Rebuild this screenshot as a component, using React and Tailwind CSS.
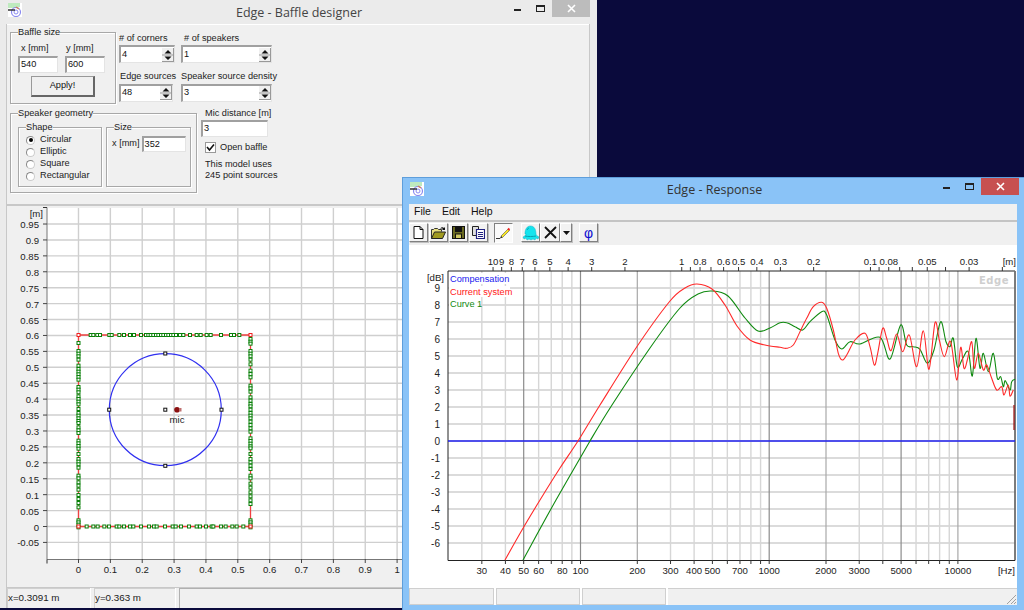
import React from "react";

const font = { fontFamily: '"Liberation Sans", Arial, sans-serif' };

function smooth(pts) {
  let d = `M${pts[0][0]} ${pts[0][1]}`;
  for (let i = 0; i < pts.length - 1; i++) {
    const p0 = pts[i - 1] || pts[i], p1 = pts[i], p2 = pts[i + 1], p3 = pts[i + 2] || p2;
    const c1 = [p1[0] + (p2[0] - p0[0]) / 6, p1[1] + (p2[1] - p0[1]) / 6];
    const c2 = [p2[0] - (p3[0] - p1[0]) / 6, p2[1] - (p3[1] - p1[1]) / 6];
    d += `C${c1[0].toFixed(1)} ${c1[1].toFixed(1)} ${c2[0].toFixed(1)} ${c2[1].toFixed(1)} ${p2[0].toFixed(1)} ${p2[1].toFixed(1)}`;
  }
  return d;
}

const z9 = (a) => a.map(([x, y]) => [780 + x / 3, 290 + y / 3]);
const redPts = [[505, 560], [522, 530], [540, 500], [560, 468], [578, 441], [600, 405], [638, 345], [670, 301], [685, 288], [697, 284], [712, 289], [725, 305], [737, 326], [750, 340], [765, 345],
  ...z9([[0,172],[20,175],[40,165],[60,125],[80,85],[100,50],[125,37],[140,55],[160,120],[175,190],[187,210],[200,195],[225,150],[255,130],[270,170],[283,225],[293,190],[308,115],[320,145],[333,182],[350,132],[368,185],[388,135],[410,230],[430,122],[447,238],[465,98],[478,150],[493,200],[512,155],[530,270],[542,172],[552,235],[562,210],[575,155],[583,235],[595,190],[610,240],[620,225],[635,265],[650,300],[665,290],[672,315],[685,285],[690,318],[700,300]])];
const greenPts = [[523, 560], [556, 500], [590, 441], [612, 405], [650, 348], [680, 308], [698, 294], [712, 291], [728, 296], [745, 318], [758, 331], [770, 328],
  ...z9([[0,98],[20,98],[45,110],[68,120],[90,95],[125,65],[140,75],[165,150],[185,177],[210,155],[240,162],[300,142],[330,207],[362,105],[380,165],[400,170],[420,178],[442,220],[462,180],[482,95],[498,155],[510,170],[520,145],[532,230],[548,205],[565,185],[577,258],[588,145],[600,235],[610,190],[625,245],[640,190],[652,265],[662,260],[670,290],[676,272],[690,300],[695,275],[705,268]])];

const fx = (f) => 580.5 + 188.7 * Math.log10(f / 100);
const dbY = (d) => 441 - 17 * d;

function AppIcon() {
  return (
    <svg width="14" height="14" viewBox="0 0 14 14">
      <rect width="14" height="14" fill="#fff" />
      <path d="M1 0v5M3 0v5M5 0v5M7 0v5M9 0v5M11 0v4" stroke="#7fd67f" strokeWidth="1" />
      <circle cx="8" cy="9" r="4.5" fill="none" stroke="#8a8af0" strokeWidth="1.2" />
      <circle cx="8" cy="9" r="2" fill="none" stroke="#8a8af0" />
      <path d="M8 4l3 2" stroke="#d08060" strokeWidth="1.5" />
      <path d="M0 7h7" stroke="#222" strokeWidth="1.4" />
    </svg>
  );
}

function Controls({ close, text }) {
  return (
    <div className="flex items-start justify-end">
      <div className="w-[23px] h-[17px] flex items-center justify-center">
        <div className={`w-[7px] h-[2px] mt-[3px] ${text}`} />
      </div>
      <div className="w-[23px] h-[17px] flex items-center justify-center">
        <div className="w-[9px] h-[7px] border border-t-2 border-[#222] -mt-[1px]" />
      </div>
      <div className={`w-[38px] h-[17px] flex items-center justify-center ${close}`}>
        <svg width="9" height="9" viewBox="0 0 9 9"><path d="M1 1l7 7M8 1l-7 7" stroke="#fff" strokeWidth="1.6" /></svg>
      </div>
    </div>
  );
}

function Box({ label, className, children }) {
  return (
    <div className={`relative border border-[#a8a8a8] shadow-[1px_1px_0_#fff,inset_1px_1px_0_#fff] ${className}`}>
      <span className="absolute -top-[7px] left-[7px] bg-[#f0f0f0] leading-3 text-[9.2px] text-[#222] whitespace-nowrap">{label}</span>
      {children}
    </div>
  );
}

function Input({ value, className }) {
  return (
    <div className={`bg-white border-t-2 border-l-2 border-[#a0a0a0] border-b border-r border-b-[#e4e4e4] border-r-[#e4e4e4] flex items-center pl-[1px] text-[9.2px] text-[#111] ${className}`}>
      {value}
    </div>
  );
}

function Spin({ value, className }) {
  return (
    <div className={`relative bg-white border-t-2 border-l-2 border-[#a0a0a0] border-b border-r border-b-[#e4e4e4] border-r-[#e4e4e4] flex items-center justify-between pl-[1px] text-[9.2px] text-[#111] h-[18px] ${className}`}>
      {value}
      <svg width="12" height="14" viewBox="0 0 12 14" className="bg-[#f0f0f0]">
        <path d="M0 7h12M11.5 0v14M0 13.5h12" stroke="#999" />
        <path d="M6 2l3.5 3.5h-7zM6 12l3.5-3.5h-7z" fill="#111" />
      </svg>
    </div>
  );
}

function Radio({ label, on }) {
  return (
    <div className="flex items-center h-[12px] gap-[5px] text-[9.2px] text-[#222]">
      <div className="w-[9px] h-[9px] rounded-full bg-white border border-[#ccc] border-t-[#888] border-l-[#888] flex items-center justify-center">
        {on && <div className="w-[4px] h-[4px] rounded-full bg-black" />}
      </div>
      {label}
    </div>
  );
}

function Baffle() {
  const xs = [];
  for (let i = 0; i <= 10; i++) xs.push(i / 10);
  const ys = [];
  for (let i = -1; i <= 19; i++) ys.push(i * 0.05);
  const X = (v) => 78.5 + v * 318.6;
  const Y = (v) => 527.5 - v * 318.4;
  const fmt = (v) => (Math.abs(v) < 1e-6 ? "0" : String(+v.toFixed(2)));
  const top = [92,100,112,120,148,155,178,192,210,222,243,258,265,272,280,288,295,303,310,318,325,333,340,348,360,370,390,410,422,440,452,483,513,522,538].map((a) => 60 + a / 3);
  const left = [72,96,104,112,122,140,150,158,166,174,182,204,212,220,232,240,248,256,270,282,290,298,306,312,325,334,342,365,373,381,389,405,420,428,436,446,470,478,490,500,512,528,540,552,565,604,610,617,625].map((a) => 320 + a / 3);
  const right = [60,68,74,96,104,112,122,136,155,165,175,200,208,218,235,245,255,262,272,282,290,298,308,318,328,338,358,366,374,382,388,405,420,430,440,450,470,478,494,506,520,532,544,555,604,610,617,625].map((a) => 320 + a / 3);
  const bottom = [260,280,293,313,327,350,358,372,390,400,423,447,462,470,495,518,527,543,567,590,600,618,635,640,663,677,697,710,730].map((a) => a / 3);
  const sq = (x, y, k, c = "#0a800a") => <rect key={k} x={x - 1.5} y={y - 1.5} width="3" height="3" fill="#fff" stroke={c} strokeWidth="1" />;
  return (
    <svg viewBox="7 207 396 380" width="396" height="380" className="block" style={font}>
      <rect x="47" y="209" width="356" height="351" fill="#fff" />
      {xs.map((v) => <line key={v} x1={X(v)} x2={X(v)} y1="209" y2="560" stroke="#cfcfcf" strokeWidth="1.4" />)}
      {ys.map((v) => <line key={v} x1="47" x2="403" y1={Y(v)} y2={Y(v)} stroke="#cfcfcf" strokeWidth="1.4" />)}
      <path d="M47 208.5V560.5H403" fill="none" stroke="#777" />
      <path d="M43 208.5h4" stroke="#333" />
      <path d="M47 560.5v4" stroke="#333" />
      {xs.map((v) => <line key={v} x1={X(v)} x2={X(v)} y1="560" y2="564" stroke="#444" />)}
      {ys.map((v) => <line key={v} x1="43" x2="47" y1={Y(v)} y2={Y(v)} stroke="#444" />)}
      {ys.map((v) => <text key={v} x="39" y={Y(v) + 4} textAnchor="end" fontSize="9.6" fill="#222">{fmt(v)}</text>)}
      {xs.map((v) => <text key={v} x={X(v)} y="574" textAnchor="middle" fontSize="9.6" fill="#222">{fmt(v)}</text>)}
      <text x="43" y="218" textAnchor="end" fontSize="9.6" fill="#222">[m]</text>
      <path d="M78.5 336H250.5V527.5H78.5Z" fill="none" stroke="#f04040" strokeWidth="1.3" />
      <circle cx="165.3" cy="410.7" r="56" fill="none" stroke="#3030f0" strokeWidth="1.2" />
      {top.map((x, i) => sq(x, 336, "t" + i))}
      {left.map((y, i) => sq(78.5, y, "l" + i))}
      {right.map((y, i) => sq(250.5, y, "r" + i))}
      {bottom.map((x, i) => sq(x, 527.5, "b" + i))}
      {[[78.5, 336], [250.5, 336], [78.5, 527.5], [250.5, 527.5]].map(([x, y], i) => sq(x, y, "c" + i, "#f02020"))}
      {[[165.3, 354.5], [165.3, 466.8], [109.2, 410.7], [221.5, 410.7], [165.3, 410.7]].map(([x, y], i) => sq(x, y, "h" + i, "#111"))}
      <circle cx="177" cy="410.7" r="2.8" fill="#8a1010" />
      <rect x="179" y="409" width="2.5" height="3.5" fill="#c07070" />
      <text x="177" y="424" textAnchor="middle" fontSize="9.6" fill="#222">mic</text>
    </svg>
  );
}

function Response() {
  const freqs = [30,40,50,60,70,80,90,100,200,300,400,500,600,700,800,900,1000,2000,3000,4000,5000,6000,7000,8000,9000,10000];
  const dark = { 50: "#8c8c8c", 100: "#8c8c8c", 200: "#a8a8a8", 1000: "#8c8c8c", 2000: "#a8a8a8", 5000: "#8c8c8c", 10000: "#a8a8a8" };
  const freqLabels = [30,40,50,60,80,100,200,300,400,500,700,1000,2000,3000,5000,10000];
  const dbs = [];
  for (let d = 9; d >= -6; d--) dbs.push(d);
  const lam = (m) => fx(344 / m);
  const lamTicks = [10,9,8,7,6,5,4,3,2,1,0.9,0.8,0.7,0.6,0.5,0.4,0.3,0.2,0.1,0.09,0.08,0.07,0.06,0.05,0.04,0.03,0.02];
  const lamLabels = [10,9,8,7,6,5,4,3,2,1,0.8,0.6,0.5,0.4,0.3,0.2,0.1,0.08,0.05,0.03];
  return (
    <svg viewBox="409 245 608 343" width="608" height="343" className="block bg-white" style={font}>
      {dbs.map((d) => <line key={d} x1="448" x2="1015" y1={dbY(d)} y2={dbY(d)} stroke="#cfcfcf" strokeWidth="1.4" />)}
      {freqs.map((f) => <line key={f} x1={fx(f)} x2={fx(f)} y1="271" y2="560" stroke={dark[f] || "#d6d6d6"} strokeWidth={dark[f] ? 1.2 : 1.4} />)}
      <path d="M448 271V560.5H1015V271H448" fill="none" stroke="#222" strokeWidth="1" />
      <line x1="1015" x2="1015" y1="271" y2="560" stroke="#777" strokeWidth="1.6" />
      {freqs.map((f) => <line key={f} x1={fx(f)} x2={fx(f)} y1="560" y2="564" stroke="#333" />)}
      {lamTicks.map((m) => <line key={m} x1={lam(m)} x2={lam(m)} y1="267" y2="271" stroke="#333" />)}
      {dbs.map((d) => <text key={d} x="440" y={dbY(d) + 4} textAnchor="end" fontSize="10" fill="#222">{d}</text>)}
      <text x="444" y="281" textAnchor="end" fontSize="9.6" fill="#222">[dB]</text>
      {freqLabels.map((f) => <text key={f} x={fx(f)} y="574" textAnchor="middle" fontSize="9.6" fill="#222">{f}</text>)}
      <text x="1015" y="574" textAnchor="end" fontSize="9.6" fill="#222">[Hz]</text>
      {lamLabels.map((m) => <text key={m} x={lam(m)} y="265" textAnchor="middle" fontSize="9.6" fill="#222">{m}</text>)}
      <text x="1016" y="265" textAnchor="end" fontSize="9.6" fill="#222">[m]</text>
      <line x1="448" x2="1015" y1="441" y2="441" stroke="#2020f0" strokeWidth="1.3" />
      <path d={smooth(greenPts)} fill="none" stroke="#108a10" strokeWidth="1.1" />
      <path d={smooth(redPts)} fill="none" stroke="#ff2a2a" strokeWidth="1.1" />
      <path d="M1014 405V430" stroke="#a01010" strokeWidth="1.2" />
      <rect x="449" y="273" width="59" height="11" fill="#fff" />
      <rect x="449" y="286" width="61" height="11" fill="#fff" />
      <rect x="449" y="298" width="31" height="11" fill="#fff" />
      <text x="450" y="282" fontSize="9.2" fill="#2020f0">Compensation</text>
      <text x="450" y="295" fontSize="9.2" fill="#ff2020">Current system</text>
      <text x="450" y="307" fontSize="9.2" fill="#108a10">Curve 1</text>
      <text x="979" y="284" fontSize="10" fontWeight="700" letterSpacing="0.5" fill="#cfcfcf" style={{ fontFamily: '"DejaVu Sans", sans-serif' }}>Edge</text>
    </svg>
  );
}

function ToolBtn({ children, className = "w-[19px]" }) {
  return (
    <div className={`h-[19px] flex items-center justify-center bg-[#f2f2f2] border border-white border-r-[#808080] border-b-[#808080] shadow-[1px_1px_0_#c0c0c0] ${className}`}>
      {children}
    </div>
  );
}

function Toolbar() {
  return (
    <div className="h-[23px] flex items-start pt-[1px] bg-[#f0f0f0]">
      <ToolBtn>
        <svg width="11" height="13" viewBox="0 0 11 13"><path d="M1 .5h6l3 3v9H1z" fill="#fff" stroke="#111" /><path d="M7 .5v3h3" fill="none" stroke="#111" /></svg>
      </ToolBtn>
      <div className="w-px" />
      <ToolBtn>
        <svg width="15" height="13" viewBox="0 0 15 13"><path d="M.5 12.5v-9h2l1-1h3l1 1h3v2" fill="#e8e080" stroke="#333" /><path d="M.5 12.5l3-6.500h11l-3 6.500z" fill="#a09a20" stroke="#222" /><path d="M9 3c1-2 3-2 4-1l1-1v3h-3l1-1c-1-.7-2-.5-3 0z" fill="#111" /></svg>
      </ToolBtn>
      <div className="w-px" />
      <ToolBtn>
        <svg width="13" height="13" viewBox="0 0 13 13"><rect x=".5" y=".5" width="12" height="12" fill="#6a6a20" stroke="#111" /><rect x="3" y="1" width="7" height="5" fill="#111" /><rect x="3.5" y="8" width="6" height="4.5" fill="#cfc860" stroke="#111" /></svg>
      </ToolBtn>
      <div className="w-px" />
      <ToolBtn>
        <svg width="13" height="13" viewBox="0 0 13 13"><path d="M.5.5h6v9h-6z" fill="#ddd" stroke="#222" /><path d="M4.500 3.500h8v9h-8z" fill="#fff" stroke="#202080" strokeWidth="1.2" /><path d="M6 6.500h5M6 8.500h5M6 10.500h5" stroke="#202080" /></svg>
      </ToolBtn>
      <div className="w-[6px]" />
      <div className="w-[19px] h-[20px] flex items-center justify-center bg-[#fafafa] border border-[#808080] border-r-white border-b-white">
        <svg width="15" height="13" viewBox="0 0 15 13"><path d="M5 9l7-7 1.500 1.500-7 7z" fill="#f8e820" stroke="#555" strokeWidth=".6" /><path d="M12 1.500l1.500 1.500" stroke="#f02020" strokeWidth="1.8" /><path d="M5 9l-1 2.500 2.500-1z" fill="#222" /><path d="M0 11.500h4" stroke="#333" /></svg>
      </div>
      <div className="w-[8px]" />
      <ToolBtn>
        <svg width="17" height="16" viewBox="0 0 17 16"><path d="M3 9C3 4 5 1 8.500 1S14 4 14 9c0 1 1 2 3 3l-1 2-2-1-1 2-2-1-2 1-2-1-2 1-1-2-2 1-1-2c2-1 3-2 3-3z" fill="#14e4ee" stroke="#10b0c0" strokeWidth=".5" /><path d="M5 5c1-1 1-2 2-2M3 11c3 .7 8 .7 11 0" stroke="#08a0b0" fill="none" /></svg>
      </ToolBtn>
      <ToolBtn className="w-[20px]">
        <svg width="13" height="13" viewBox="0 0 13 13"><path d="M1 1l11 11M12 1L1 12" stroke="#111" strokeWidth="1.8" /></svg>
      </ToolBtn>
      <ToolBtn className="w-[12px]">
        <svg width="7" height="4" viewBox="0 0 7 4"><path d="M0 0h7L3.500 4z" fill="#111" /></svg>
      </ToolBtn>
      <div className="w-[7px]" />
      <ToolBtn>
        <span className="text-[14px] leading-none text-[#1010d0]">φ</span>
      </ToolBtn>
    </div>
  );
}

export default function App() {
  return (
    <div className="relative w-[1024px] h-[610px] overflow-hidden bg-[#0a0a3c]" style={font}>
      {/* Baffle designer window */}
      <div className="absolute left-0 top-0 w-[597px] h-[608px] bg-[#ebebeb] flex flex-col">
        <div className="grid grid-cols-[1fr_auto_1fr] h-[24px] pl-[8px] pr-[7px] items-start">
          <div className="pt-[3px]"><AppIcon /></div>
          <div className="text-[12.5px] leading-[26px] text-[#444]" style={{ fontFamily: '"Open Sans", sans-serif' }}>Edge - Baffle designer</div>
          <Controls close="bg-[#bcbcbc]" text="bg-[#222]" />
        </div>
        <div className="ml-[6px] mr-[7px] flex-1 min-h-0 flex flex-col bg-[#f0f0f0] border-l border-r border-[#c8c8c8]">
          <div className="h-[182px] pl-[3px] pt-[7px] border-t border-white border-b-2 border-b-[#c8c8c8]">
            <div className="flex">
              <Box label="Baffle size" className="w-[106px] h-[72px] shrink-0">
                <div className="flex gap-[7px] pl-[7px] pt-[9px]">
                  <div className="w-[40px]">
                    <div className="text-[9.2px] leading-[13px] text-[#222] pl-[3px]">x [mm]</div>
                    <Input value="540" className="h-[17px] w-[40px] mt-[1px]" />
                  </div>
                  <div className="w-[40px]">
                    <div className="text-[9.2px] leading-[13px] text-[#222] pl-[1px]">y [mm]</div>
                    <Input value="600" className="h-[17px] w-[40px] mt-[1px]" />
                  </div>
                </div>
                <div className="ml-[20px] mt-[3px] w-[64px] h-[21px] bg-[#f0f0f0] border border-[#666] border-t-[#999] border-l-[#999] border-r-2 border-b-2 flex items-center justify-center text-[9.2px] text-[#111]">Apply!</div>
              </Box>
              <div className="grid grid-cols-[58px_96px] gap-x-[4px] ml-[3px] -mt-[1px]">
                <div>
                  <div className="text-[9.2px] leading-[14px] text-[#222]">{"# of corners"}</div>
                  <Spin value="4" className="w-[56px]" />
                </div>
                <div>
                  <div className="text-[9.2px] leading-[14px] text-[#222] pl-[3px]">{"# of speakers"}</div>
                  <Spin value="1" className="w-[91px]" />
                </div>
                <div className="mt-[2px]">
                  <div className="text-[9.2px] leading-[16px] whitespace-nowrap text-[#222] pl-[1px]">Edge sources</div>
                  <Spin value="48" className="w-[54px]" />
                </div>
                <div className="mt-[2px]">
                  <div className="text-[9.2px] leading-[16px] whitespace-nowrap text-[#222]">Speaker source density</div>
                  <Spin value="3" className="w-[91px]" />
                </div>
              </div>
            </div>
            <div className="flex mt-[9px]">
              <Box label="Speaker geometry" className="w-[187px] h-[80px] shrink-0 flex gap-[4px] pl-[7px] pt-[13px]">
                <Box label="Shape" className="w-[84px] h-[60px] shrink-0 pl-[7px] pt-[6px]">
                  <Radio label="Circular" on />
                  <Radio label="Elliptic" />
                  <Radio label="Square" />
                  <Radio label="Rectangular" />
                </Box>
                <Box label="Size" className="w-[85px] h-[60px] shrink-0">
                  <div className="flex items-center gap-[2px] pl-[5px] pt-[8px] text-[9.2px] text-[#222]">
                    <span className="whitespace-nowrap">x [mm]</span>
                    <Input value="352" className="w-[44px] h-[16px]" />
                  </div>
                </Box>
              </Box>
              <div className="ml-[4px] -mt-[7px] w-[90px]">
                <div className="text-[9.2px] leading-[14px] pl-[4px] text-[#222]">Mic distance [m]</div>
                <Input value="3" className="w-[67px] h-[17px]" />
                <div className="flex items-center gap-[4px] pl-[4px] mt-[4px] text-[9.2px] text-[#222]">
                  <div className="w-[11px] h-[11px] bg-white border border-[#999] flex items-center justify-center">
                    <svg width="9" height="9" viewBox="0 0 9 9"><path d="M1 4l2.500 3L8 1.500" fill="none" stroke="#111" strokeWidth="1.6" /></svg>
                  </div>
                  Open baffle
                </div>
                <div className="text-[9.2px] leading-[11px] pl-[4px] mt-[4px] whitespace-nowrap text-[#222]">This model uses<br />245 point sources</div>
              </div>
            </div>
          </div>
          <div className="flex-1 min-h-0 overflow-hidden">
            <Baffle />
          </div>
          <div className="h-[21px] flex gap-[3px] border-t border-[#c8c8c8] text-[9.8px] leading-[20px] text-[#222]">
            <div className="w-[84px] pl-px border-r border-white shadow-[inset_1px_1px_0_#d0d0d0]">x=0.3091 m</div>
            <div className="w-[82px] pl-px border-r border-white shadow-[inset_1px_1px_0_#d0d0d0]">y=0.363 m</div>
            <div className="flex-1 shadow-[inset_1px_1px_0_#b0b0b0]" />
          </div>
        </div>
      </div>

      {/* Response window */}
      <div className="absolute left-[402px] top-[177px] w-[622px] h-[433px] bg-[#8ac3f7] border-l border-t border-[#5e9edb] flex flex-col">
        <div className="grid grid-cols-[1fr_auto_1fr] h-[26px] shrink-0 pl-[7px] pr-[5px] items-start">
          <div className="pt-[4px]"><AppIcon /></div>
          <div className="text-[12.5px] leading-[24px] text-[#333]" style={{ fontFamily: '"Open Sans", sans-serif' }}>Edge - Response</div>
          <Controls close="bg-[#c75050]" text="bg-[#222]" />
        </div>
        <div className="ml-[6px] mr-[7px] flex flex-col">
          <div className="h-[16px] flex items-center gap-[11px] pl-[5px] bg-[#f0f0f0] text-[10.5px] text-[#111]">
            <span>File</span>
            <span>Edit</span>
            <span>Help</span>
          </div>
          <div className="h-[2px] bg-[#c4c4c4]" />
          <Toolbar />
          <Response />
          <div className="h-[17px] flex gap-[2px] bg-white">
            <div className="w-[85px] bg-[#f0f0f0] border border-[#cfcfcf]" />
            <div className="w-[84px] bg-[#f0f0f0] border border-[#cfcfcf]" />
            <div className="w-[84px] bg-[#f0f0f0] border border-[#cfcfcf]" />
            <div className="flex-1 bg-[#f0f0f0] border-t border-[#cfcfcf] flex justify-end items-end">
              <svg width="11" height="11" viewBox="0 0 11 11"><path d="M1 10l9-9M5 10l5-5M8 10l2-2" stroke="#a0a0a0" /></svg>
            </div>
          </div>
        </div>
      </div>
    </div>
  );
}
